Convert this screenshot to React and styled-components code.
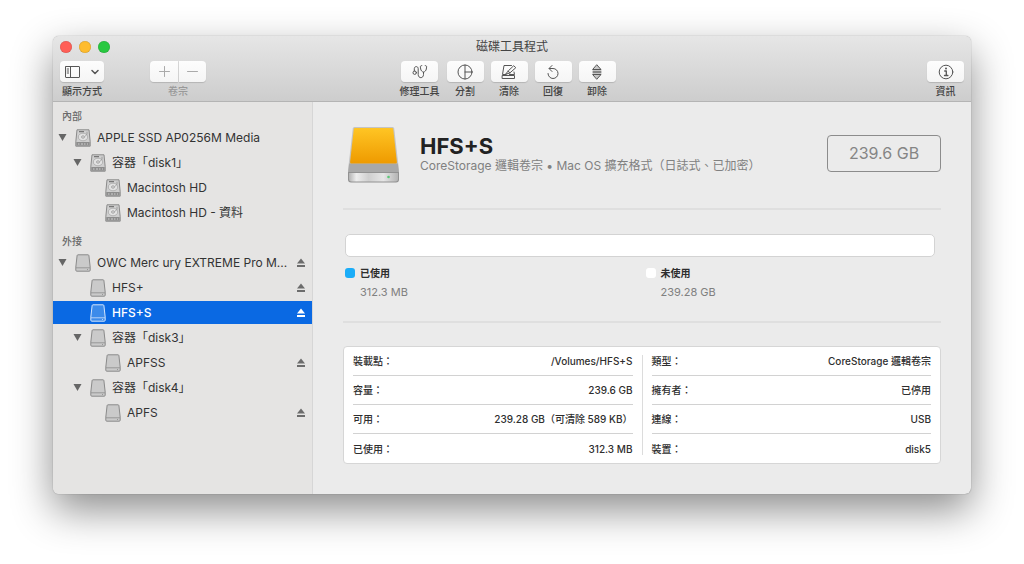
import { useState } from 'react';
import styled, { createGlobalStyle } from 'styled-components';

const GlobalStyle = createGlobalStyle`
  * {
    box-sizing: border-box;
  }
  body {
    margin: 0;
    background: #fff;
    color: #2e2e2e;
    font-family: Inter, 'Noto Sans CJK TC', sans-serif;
    font-size: 12px;
    line-height: 16px;
  }
  button {
    margin: 0;
    padding: 0;
    border: 0;
    background: none;
    color: inherit;
    font: inherit;
  }
  svg {
    display: block;
    flex: none;
  }
`;

const Desktop = styled.div`
  padding: 36px 53px 70px;
`;

const Window = styled.div`
  overflow: hidden;
  border-radius: 6px;
  background: #ebebeb;
  box-shadow: 0 0 1px rgba(0, 0, 0, 0.5), 0 16px 40px rgba(0, 0, 0, 0.45);
`;

// Title bar and toolbar share one gradient.
const Header = styled.header`
  border-bottom: 1px solid #b4b4b4;
  background: linear-gradient(#e6e6e6, #cdcdcd);
`;

const TitleBar = styled.div`
  display: grid;
  grid-template-columns: 1fr auto 1fr;
  align-items: center;
  height: 22px;
  padding: 0 7px;
`;

const Lights = styled.div`
  display: flex;
  gap: 7px;
`;

const Light = styled.button`
  width: 12px;
  height: 12px;
  border-radius: 50%;
  background: ${(props) => props.$color};
  box-shadow: inset 0 0 1px rgba(0, 0, 0, 0.4);
`;

const Title = styled.h1`
  margin: 0;
  font-size: 12px;
  font-weight: 400;
  line-height: 16px;
  color: #444;
`;

const Toolbar = styled.div`
  display: grid;
  grid-template-columns: 1fr auto 1fr;
  padding: 3px 7px;
`;

const ToolGroup = styled.div`
  display: flex;
  gap: ${(props) => props.$gap || 7}px;
  margin-right: ${(props) => (props.$center ? 9 : 0)}px;
  justify-content: ${(props) => (props.$end ? 'flex-end' : 'flex-start')};
`;

const Tool = styled.div`
  display: flex;
  flex-direction: column;
  align-items: center;
  gap: 2px;
  font-size: 10px;
  font-weight: 500;
  line-height: 14px;
  color: ${(props) => (props.$disabled ? '#999' : '#444')};
`;

const ToolButton = styled.button`
  display: flex;
  align-items: center;
  justify-content: center;
  gap: 11px;
  width: ${(props) => props.$width || 37}px;
  height: 21px;
  border-radius: 4px;
  background: linear-gradient(#fdfdfd, #f5f5f5);
  box-shadow: 0 1px 1px rgba(0, 0, 0, 0.15);
  color: #555;
`;

const Segments = styled.div`
  display: flex;
  gap: 1px;
  ${ToolButton} {
    color: #aaa;
  }
  ${ToolButton}:first-child {
    border-radius: 4px 0 0 4px;
  }
  ${ToolButton}:last-child {
    border-radius: 0 4px 4px 0;
  }
`;

const Body = styled.div`
  display: flex;
`;

const Sidebar = styled.nav`
  flex: 0 0 260px;
  padding-top: 6px;
  border-right: 1px solid #d6d6d6;
  background: #e5e4e3;
`;

const Section = styled.section`
  margin-bottom: 9px;
`;

const SectionTitle = styled.h2`
  margin: 0 0 2px;
  padding-left: 9px;
  font-size: 10px;
  font-weight: 500;
  line-height: 16px;
  color: #6a6a6a;
`;

const DeviceList = styled.ul`
  display: grid;
  gap: 2px;
  margin: 0;
  padding: 0;
  list-style: none;
`;

const DeviceRow = styled.li`
  display: flex;
  align-items: center;
  height: 23px;
  padding: 0 6px 0 ${(props) => 4 + props.$level * 15}px;
  background: ${(props) => (props.$selected ? '#0a69e3' : 'transparent')};
  color: ${(props) => (props.$selected ? '#fff' : '#333')};
  font-weight: ${(props) => (props.$selected ? 500 : 400)};
`;

const Disclosure = styled.button`
  width: 12px;
  margin-right: 6px;
  color: #666;
`;

const DisclosureSpace = styled.span`
  width: 18px;
`;

const DeviceName = styled.button`
  display: flex;
  flex: 1;
  align-items: center;
  gap: 6px;
  min-width: 0;
  white-space: nowrap;
`;

const Eject = styled.button`
  color: ${(props) => (props.$selected ? '#fff' : '#6c6c6c')};
`;

const Main = styled.main`
  flex: 1;
  min-width: 0;
  padding: 0 30px 30px;
`;

const Volume = styled.div`
  display: flex;
  align-items: center;
  padding: 24px 0;
  border-bottom: 2px solid #dfdfdf;
`;

const VolumeText = styled.div`
  flex: 1;
  padding: 0 0 3px 19px;
`;

const VolumeName = styled.h2`
  margin: 0;
  font-size: 22px;
  font-weight: 700;
  line-height: 24px;
  color: #222;
`;

const VolumeKind = styled.p`
  margin: 0;
  line-height: 16px;
  color: #808080;
`;

const Capacity = styled.div`
  width: 114px;
  margin-bottom: 3px;
  border: 1px solid #8c8c8c;
  border-radius: 4px;
  font-size: 16px;
  line-height: 35px;
  text-align: center;
  color: #858585;
`;

const Usage = styled.div`
  padding: 24px 6px 21px 2px;
  border-bottom: 2px solid #dfdfdf;
`;

const UsageBar = styled.div`
  height: 23px;
  border: 1px solid #d3d3d3;
  border-radius: 5px;
  background: #fff;
`;

const Legend = styled.dl`
  display: grid;
  grid-template-columns: 1fr 1fr;
  column-gap: 11px;
  margin: 8px 0 0;
`;

const LegendItem = styled.div`
  display: grid;
  grid-template-columns: 10px 1fr;
  gap: 3px 5px;
  align-items: center;
`;

const Swatch = styled.span`
  width: 10px;
  height: 10px;
  border-radius: 3px;
  background: ${(props) => props.$color};
`;

const LegendName = styled.dt`
  font-size: 10px;
  font-weight: 700;
`;

const LegendValue = styled.dd`
  grid-column: 2;
  margin: 0;
  font-size: 11px;
  color: #808080;
`;

const Details = styled.div`
  display: grid;
  grid-template-columns: 1fr 1px 1fr;
  column-gap: 9px;
  margin-top: 23px;
  padding: 0 9px;
  border: 1px solid #d6d6d6;
  border-radius: 4px;
  background: #fff;
`;

const Divider = styled.div`
  margin: 8px 0;
  background: #dcdcdc;
`;

const DetailTable = styled.table`
  width: 100%;
  border-spacing: 0;
  font-size: 10px;
  tr:not(:last-child) > * {
    border-bottom: 1px solid #d2d2d2;
  }
`;

const DetailName = styled.th`
  height: 29px;
  padding: 0;
  font-weight: 500;
  text-align: left;
`;

const DetailValue = styled.td`
  height: 29px;
  padding: 0;
  font-weight: 500;
  text-align: right;
`;

const Line = ({ width = 16, height = 16, children }) => (
  <svg
    width={width}
    height={height}
    viewBox={`0 0 ${width} ${height}`}
    fill="none"
    stroke="currentColor"
    strokeWidth="1"
    strokeLinecap="round"
    strokeLinejoin="round"
    aria-hidden="true"
  >
    {children}
  </svg>
);

const SidebarIcon = () => (
  <Line width={15} height={12}>
    <rect x="0.5" y="0.5" width="14" height="11" rx="0.5" />
    <path d="M5.5 .5v11M2.2 3h1.4M2.2 5h1.4M2.2 7h1.4" />
  </Line>
);

const ChevronIcon = () => (
  <Line width={8} height={6}>
    <path d="M1 1.5l3 3 3-3" strokeWidth="1.5" />
  </Line>
);

const PlusIcon = () => (
  <Line width={11} height={11}>
    <path d="M5.5.5v10M.5 5.5h10" />
  </Line>
);

const MinusIcon = () => (
  <Line width={11} height={11}>
    <path d="M.5 5.5h10" />
  </Line>
);

const FirstAidIcon = () => (
  <Line>
    <circle cx="2.7" cy="8.7" r="1.7" />
    <path d="M2.3 7V4.700c0-2.800 3.900-2.800 3.900 0V10.500c0 4.200 5.300 4.200 5.300 0V8.200" />
    <path d="M9.800 1.600c-1.200 0-1.500.5-1.400 1.500l.3 1.900c.2 1.500 1.200 2.600 2.800 3.200 1.600-.6 2.600-1.700 2.800-3.200l.3-1.900c.1-1-.2-1.500-1.400-1.500" />
  </Line>
);

const PartitionIcon = () => (
  <Line>
    <circle cx="8" cy="8" r="7" />
    <path d="M8 1v14M8 8h7" />
  </Line>
);

const EraseIcon = () => (
  <Line>
    <path d="M10.500 1.500H3L1.500 10.500H5M13 8l.5 2.500H8.500" />
    <rect x="1.500" y="11.500" width="12" height="3" />
    <path d="M13 2l1.800 1.700L8.800 9 4.500 10.300 7.200 7zM7.200 7l1.600 2" />
  </Line>
);

const RestoreIcon = () => (
  <Line>
    <path d="M4.500 4.500H8a5 5 0 1 1-5 5M7 1.500l-3 3 3 3" />
  </Line>
);

const UnmountIcon = () => (
  <Line>
    <path d="M8 1l4 4.500H4zM8 15l4-4.500H4z" fill="currentColor" fillOpacity="0.3" />
    <path d="M4 7.200h8M4 8.800h8" />
  </Line>
);

const InfoIcon = () => (
  <Line>
    <circle cx="8" cy="8" r="6.800" />
    <path d="M6.700 7h1.600v4.500M6.500 11.500h3.400" strokeWidth="1.300" />
    <circle cx="8" cy="4.500" r="1" fill="currentColor" stroke="none" />
  </Line>
);

const TriangleIcon = () => (
  <svg width="12" height="9" viewBox="0 0 12 9" aria-hidden="true">
    <path d="M1.500 1h8L5.500 8z" fill="currentColor" />
  </svg>
);

const EjectIcon = () => (
  <svg width="10" height="10" viewBox="0 0 10 10" fill="currentColor" aria-hidden="true">
    <path d="M5 .5l4 5H1zM1 7h8v2H1z" />
  </svg>
);

const InternalDiskIcon = () => (
  <svg width="16" height="18" viewBox="0 0 16 18" fill="none" stroke="#8a8a8a" aria-hidden="true">
    <path d="M2 .8h12l1.200 12v4.400H.8v-4.400z" fill="#cfcfcf" strokeLinejoin="round" />
    <path d="M1.300 13h13.400v3.700H1.300z" fill="#8d8d8d" stroke="none" />
    <ellipse cx="8" cy="8" rx="4.700" ry="3.800" fill="#e2e2e2" stroke="#a2a2a2" strokeWidth="0.700" />
    <ellipse cx="8" cy="8" rx="1.500" ry="1.200" strokeWidth="0.700" />
    <path d="M4 2.600h5" stroke="#777" strokeWidth="1.200" />
    <path d="M12 2.700v2.500L10 7.500" strokeWidth="0.700" />
    <path d="M3 15h1.500M6 15h2M9 15h1.500M12 15h1" stroke="#d0d0d0" strokeWidth="1.200" />
  </svg>
);

const ExternalDiskIcon = ({ selected }) => (
  <svg
    width="16"
    height="18"
    viewBox="0 0 16 18"
    stroke={selected ? '#d4e5fb' : '#8a8a8a'}
    fill={selected ? '#3c8bea' : '#cacaca'}
    strokeLinejoin="round"
    aria-hidden="true"
  >
    <path d="M3 .8h10q.8 0 .9.800l1.300 11.500v3q0 1.100-1 1.100H1.800q-1 0-1-1.100v-3L2.100 1.600q.1-.8.900-.8z" />
    <path d="M1 13.800h14M12 15.500h1" strokeWidth="0.800" />
  </svg>
);

const DriveIcon = () => (
  <svg width="58" height="58" viewBox="0 0 58 58" aria-hidden="true">
    <defs>
      <linearGradient id="cover" x1="0" y1="0" x2="0" y2="1">
        <stop offset="0" stopColor="#ffc524" />
        <stop offset="1" stopColor="#ee9a00" />
      </linearGradient>
      <linearGradient id="front" x1="0" y1="0" x2="1" y2="0">
        <stop offset="0" stopColor="#b4b4b4" />
        <stop offset="0.150" stopColor="#ededed" />
        <stop offset="0.400" stopColor="#cfcfcf" />
        <stop offset="0.700" stopColor="#e6e6e6" />
        <stop offset="1" stopColor="#b4b4b4" />
      </linearGradient>
    </defs>
    <path d="M11.500 1h38q1.500 0 1.700 1.500L56 44v3.500H5V44L9.800 2.500Q10 1 11.500 1z" fill="#c4c4c4" />
    <path d="M6.200 37.500h48.600L56 47H5z" fill="#a8a8a8" />
    <path d="M12 2h37q1 0 1.200 1l3.700 33q.1 1.500-1 1.500H8.100q-1.100 0-1-1.500L10.800 3q.2-1 1.200-1z" fill="url(#cover)" />
    <path d="M5 46h51v7.500q0 3-3 3H8q-3 0-3-3z" fill="#929292" />
    <path d="M6 47h49v6q0 2.500-2.500 2.500h-44Q6 55.500 6 53z" fill="url(#front)" />
    <circle cx="45.500" cy="51" r="1.300" fill="#5cc878" />
  </svg>
);

const tools = [
  { label: '修理工具', icon: <FirstAidIcon /> },
  { label: '分割', icon: <PartitionIcon /> },
  { label: '清除', icon: <EraseIcon /> },
  { label: '回復', icon: <RestoreIcon /> },
  { label: '卸除', icon: <UnmountIcon /> },
];

const sections = [
  {
    title: '內部',
    internal: true,
    devices: [
      { id: 'ssd', name: 'APPLE SSD AP0256M Media', level: 0, open: true },
      { id: 'disk1', name: '容器「disk1」', level: 1, open: true },
      { id: 'hd', name: 'Macintosh HD', level: 2 },
      { id: 'data', name: 'Macintosh HD - 資料', level: 2 },
    ],
  },
  {
    title: '外接',
    devices: [
      { id: 'owc', name: 'OWC Merc ury EXTREME Pro M...', level: 0, open: true, eject: true },
      { id: 'hfs', name: 'HFS+', level: 1, eject: true },
      { id: 'hfss', name: 'HFS+S', level: 1, eject: true },
      { id: 'disk3', name: '容器「disk3」', level: 1, open: true },
      { id: 'apfss', name: 'APFSS', level: 2, eject: true },
      { id: 'disk4', name: '容器「disk4」', level: 1, open: true },
      { id: 'apfs', name: 'APFS', level: 2, eject: true },
    ],
  },
];

const details = [
  [
    ['裝載點：', '/Volumes/HFS+S'],
    ['容量：', '239.6 GB'],
    ['可用：', '239.28 GB（可清除 589 KB）'],
    ['已使用：', '312.3 MB'],
  ],
  [
    ['類型：', 'CoreStorage 邏輯卷宗'],
    ['擁有者：', '已停用'],
    ['連線：', 'USB'],
    ['裝置：', 'disk5'],
  ],
];

const Device = ({ device, internal, selected, onSelect }) => (
  <DeviceRow $level={device.level} $selected={selected}>
    {device.open ? (
      <Disclosure aria-label="收合" aria-expanded="true">
        <TriangleIcon />
      </Disclosure>
    ) : (
      <DisclosureSpace />
    )}
    <DeviceName onClick={() => onSelect(device.id)}>
      {internal ? <InternalDiskIcon /> : <ExternalDiskIcon selected={selected} />}
      {device.name}
    </DeviceName>
    {device.eject && (
      <Eject $selected={selected} aria-label="退出">
        <EjectIcon />
      </Eject>
    )}
  </DeviceRow>
);

const DetailColumn = ({ rows }) => (
  <DetailTable>
    <tbody>
      {rows.map(([name, value]) => (
        <tr key={name}>
          <DetailName scope="row">{name}</DetailName>
          <DetailValue>{value}</DetailValue>
        </tr>
      ))}
    </tbody>
  </DetailTable>
);

function App() {
  const [selectedId, setSelectedId] = useState('hfss');

  return (
    <Desktop>
      <GlobalStyle />
      <Window>
        <Header>
          <TitleBar>
            <Lights>
              <Light $color="#ff5f57" aria-label="關閉" />
              <Light $color="#febc2e" aria-label="縮到最小" />
              <Light $color="#28c840" aria-label="縮放" />
            </Lights>
            <Title>磁碟工具程式</Title>
          </TitleBar>
          <Toolbar>
            <ToolGroup $gap={46}>
              <Tool>
                <ToolButton $width={44} aria-label="顯示方式">
                  <SidebarIcon />
                  <ChevronIcon />
                </ToolButton>
                <span>顯示方式</span>
              </Tool>
              <Tool $disabled>
                <Segments>
                  <ToolButton $width={28} disabled aria-label="加入卷宗">
                    <PlusIcon />
                  </ToolButton>
                  <ToolButton $width={27} disabled aria-label="移除卷宗">
                    <MinusIcon />
                  </ToolButton>
                </Segments>
                <span>卷宗</span>
              </Tool>
            </ToolGroup>
            <ToolGroup $center>
              {tools.map((tool) => (
                <Tool key={tool.label}>
                  <ToolButton aria-label={tool.label}>{tool.icon}</ToolButton>
                  <span>{tool.label}</span>
                </Tool>
              ))}
            </ToolGroup>
            <ToolGroup $end>
              <Tool>
                <ToolButton aria-label="資訊">
                  <InfoIcon />
                </ToolButton>
                <span>資訊</span>
              </Tool>
            </ToolGroup>
          </Toolbar>
        </Header>

        <Body>
          <Sidebar>
            {sections.map((section) => (
              <Section key={section.title}>
                <SectionTitle>{section.title}</SectionTitle>
                <DeviceList>
                  {section.devices.map((device) => (
                    <Device
                      key={device.id}
                      device={device}
                      internal={section.internal}
                      selected={device.id === selectedId}
                      onSelect={setSelectedId}
                    />
                  ))}
                </DeviceList>
              </Section>
            ))}
          </Sidebar>

          <Main>
            <Volume>
              <DriveIcon />
              <VolumeText>
                <VolumeName>HFS+S</VolumeName>
                <VolumeKind>CoreStorage 邏輯卷宗 • Mac OS 擴充格式（日誌式、已加密）</VolumeKind>
              </VolumeText>
              <Capacity>239.6 GB</Capacity>
            </Volume>

            <Usage>
              <UsageBar />
              <Legend>
                <LegendItem>
                  <Swatch $color="#1badf8" />
                  <LegendName>已使用</LegendName>
                  <LegendValue>312.3 MB</LegendValue>
                </LegendItem>
                <LegendItem>
                  <Swatch $color="#fff" />
                  <LegendName>未使用</LegendName>
                  <LegendValue>239.28 GB</LegendValue>
                </LegendItem>
              </Legend>
            </Usage>

            <Details>
              <DetailColumn rows={details[0]} />
              <Divider />
              <DetailColumn rows={details[1]} />
            </Details>
          </Main>
        </Body>
      </Window>
    </Desktop>
  );
}

export default App;
